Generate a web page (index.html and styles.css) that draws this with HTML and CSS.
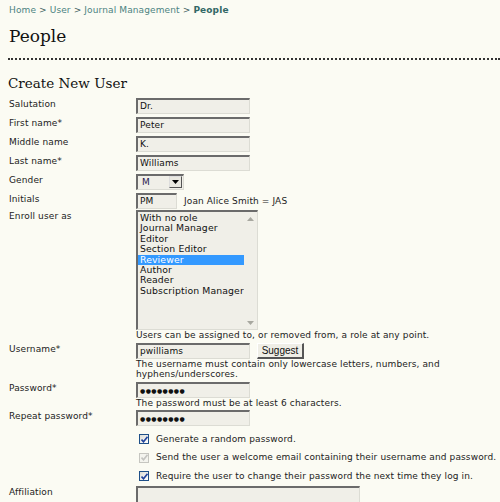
FILE: index.html
```html
<!DOCTYPE html>
<html>
<head>
<meta charset="utf-8">
<link rel="stylesheet" href="styles.css">
</head>
<body>
<div class="crumbs"><a href="#">Home</a> &gt; <a href="#">User</a> &gt; <a href="#">Journal Management</a> &gt; <a href="#" class="current">People</a></div>
<h1 class="title">People</h1>
<h2 class="subtitle">Create New User</h2>
<div class="form">
  <div class="row"><div class="label">Salutation</div><div class="field"><div class="input">Dr.</div></div></div>
  <div class="row"><div class="label">First name*</div><div class="field"><div class="input">Peter</div></div></div>
  <div class="row"><div class="label">Middle name</div><div class="field"><div class="input">K.</div></div></div>
  <div class="row"><div class="label">Last name*</div><div class="field"><div class="input">Williams</div></div></div>
  <div class="row"><div class="label">Gender</div><div class="field"><div class="select"><span class="sel-val">M</span><span class="sel-btn"><svg width="7" height="4" viewBox="0 0 7 4"><path d="M0 0H7L3.5 4Z" fill="#000"/></svg></span></div></div></div>
  <div class="row tight"><div class="label">Initials</div><div class="field inline"><div class="input small">PM</div><span class="hint">Joan Alice Smith = JAS</span></div></div>
  <div class="row tight"><div class="label">Enroll user as</div><div class="field">
    <div class="listbox">
      <ul class="options">
        <li>With no role</li>
        <li>Journal Manager</li>
        <li>Editor</li>
        <li>Section Editor</li>
        <li class="selected">Reviewer</li>
        <li>Author</li>
        <li>Reader</li>
        <li>Subscription Manager</li>
      </ul>
      <div class="scroll">
        <svg width="7" height="4" viewBox="0 0 7 4"><path d="M0 4H7L3.5 0Z" fill="#a8a8a0"/></svg>
        <svg width="7" height="4" viewBox="0 0 7 4"><path d="M0 0H7L3.5 4Z" fill="#a8a8a0"/></svg>
      </div>
    </div>
    <div class="note">Users can be assigned to, or removed from, a role at any point.</div>
  </div></div>
  <div class="row tight"><div class="label">Username*</div><div class="field">
    <div class="inline"><div class="input">pwilliams</div><span class="button">Suggest</span></div>
    <div class="note">The username must contain only lowercase letters, numbers, and hyphens/underscores.</div>
  </div></div>
  <div class="row tight"><div class="label">Password*</div><div class="field">
    <div class="input dots">&#9679;&#9679;&#9679;&#9679;&#9679;&#9679;&#9679;&#9679;</div>
    <div class="note">The password must be at least 6 characters.</div>
  </div></div>
  <div class="row"><div class="label">Repeat password*</div><div class="field"><div class="input dots">&#9679;&#9679;&#9679;&#9679;&#9679;&#9679;&#9679;&#9679;</div></div></div>
  <div class="checks">
    <div class="check"><span class="box"><svg width="7" height="7" viewBox="0 0 7 7"><path d="M0.5 3.5L2.5 5.8L6.5 0.8" stroke="#21439c" stroke-width="1.6" fill="none"/></svg></span>Generate a random password.</div>
    <div class="check"><span class="box disabled"><svg width="7" height="7" viewBox="0 0 7 7"><path d="M0.5 3.5L2.5 5.8L6.5 0.8" stroke="#c4c4c0" stroke-width="1.6" fill="none"/></svg></span>Send the user a welcome email containing their username and password.</div>
    <div class="check"><span class="box"><svg width="7" height="7" viewBox="0 0 7 7"><path d="M0.5 3.5L2.5 5.8L6.5 0.8" stroke="#21439c" stroke-width="1.6" fill="none"/></svg></span>Require the user to change their password the next time they log in.</div>
  </div>
  <div class="row"><div class="label">Affiliation</div><div class="field"><div class="textarea"></div></div></div>
</div>
</body>
</html>
```
FILE: styles.css
```css
html, body {
  margin: 0;
  padding: 0;
  background: #fbfbf3;
  overflow: hidden;
}
body {
  padding: 5px 0 0 8px;
  font-family: "DejaVu Sans", Verdana, sans-serif;
  font-size: 9px;
  line-height: 11px;
  letter-spacing: 0.12px;
  color: #222;
}
.crumbs {
  padding-left: 1px;
  color: #3d5e5e;
}
.crumbs a {
  color: #4c8381;
  text-decoration: none;
}
.crumbs a.current {
  font-weight: bold;
  color: #336866;
}
.title {
  margin: 8px 0 0 0;
  padding: 0 0 10px 1px;
  font-family: "DejaVu Serif", Georgia, serif;
  font-weight: normal;
  font-size: 17px;
  line-height: 24px;
  letter-spacing: 0;
  color: #111;
  border-bottom: 2px dotted #333;
}
.subtitle {
  margin: 14px 0 0 0;
  font-family: "DejaVu Serif", Georgia, serif;
  font-weight: normal;
  font-size: 13.5px;
  line-height: 18px;
  letter-spacing: 0;
  color: #111;
}
.form {
  padding-top: 6px;
}
.row {
  display: grid;
  grid-template-columns: 128px auto;
  margin-bottom: 3px;
}
.row.tight {
  margin-bottom: 1px;
}
.label {
  padding-left: 1px;
  padding-top: 1px;
}
.field.inline, .inline {
  display: flex;
  align-items: center;
}
.input {
  box-sizing: border-box;
  width: 114px;
  height: 16px;
  background: #f0efe8;
  border-top: 2px solid #6b6b6b;
  border-left: 2px solid #6b6b6b;
  border-right: 1px solid #dcdcd4;
  border-bottom: 1px solid #dcdcd4;
  padding: 1px 0 0 2px;
  line-height: 11px;
  color: #111;
}
.input.small {
  width: 41px;
}
.input.dots {
  font-size: 6px;
  letter-spacing: 0.4px;
  line-height: 12px;
}
.hint {
  margin-left: 7px;
}
.select {
  box-sizing: border-box;
  width: 48px;
  height: 16px;
  display: flex;
  justify-content: space-between;
  background: #f0efe8;
  border-top: 2px solid #6b6b6b;
  border-left: 2px solid #6b6b6b;
  border-right: 1px solid #dcdcd4;
  border-bottom: 1px solid #dcdcd4;
}
.sel-val {
  padding: 1px 0 0 4px;
  color: #2a2050;
}
.sel-btn {
  box-sizing: border-box;
  width: 13px;
  height: 12px;
  margin: 0 1px 0 0;
  background: #e9e8e0;
  border: 1px solid #555;
  border-top-color: #ddd;
  border-left-color: #ddd;
  display: flex;
  align-items: center;
  justify-content: center;
}
.listbox {
  box-sizing: border-box;
  width: 122px;
  height: 120px;
  display: flex;
  background: #f0efe8;
  border-top: 2px solid #6b6b6b;
  border-left: 2px solid #6b6b6b;
  border-right: 1px solid #dcdcd4;
  border-bottom: 1px solid #dcdcd4;
}
.options {
  list-style: none;
  margin: 0;
  padding: 1px 0 0 0;
  flex: 1;
  font-size: 9.3px;
  line-height: 10.4px;
  color: #111;
}
.options li {
  padding-left: 2px;
}
.options li.selected {
  background: #3399ff;
  color: #fff;
}
.scroll {
  width: 13px;
  display: flex;
  flex-direction: column;
  justify-content: space-between;
  align-items: center;
  padding: 5px 0 4px 0;
  background: #f0efe8;
}
.note {
  line-height: 10.5px;
  padding-bottom: 1px;
  padding-right: 6px;
}
.button {
  margin-left: 7px;
  box-sizing: border-box;
  height: 16px;
  width: 47px;
  display: flex;
  align-items: center;
  justify-content: center;
  background: #efeee6;
  border: 1px solid #fff;
  border-right: 2px solid #555;
  border-bottom: 2px solid #555;
  font-family: "Liberation Sans", Arial, sans-serif;
  font-size: 10px;
  letter-spacing: 0;
  color: #111;
}
.checks {
  padding: 1px 0 0 131px;
}
.check {
  display: flex;
  align-items: center;
  height: 18.5px;
}
.box {
  box-sizing: border-box;
  width: 10px;
  height: 10px;
  margin-right: 7px;
  border: 1px solid #1e4f88;
  background: linear-gradient(135deg, #dcdcd6, #ffffff);
  display: flex;
  align-items: center;
  justify-content: center;
}
.box.disabled {
  border-color: #c6c6c0;
  background: #f4f4ee;
}
.textarea {
  box-sizing: border-box;
  width: 224px;
  height: 40px;
  background: #f0efe8;
  border-top: 2px solid #6b6b6b;
  border-left: 2px solid #6b6b6b;
  border-right: 1px solid #dcdcd4;
  border-bottom: 1px solid #dcdcd4;
}
```
